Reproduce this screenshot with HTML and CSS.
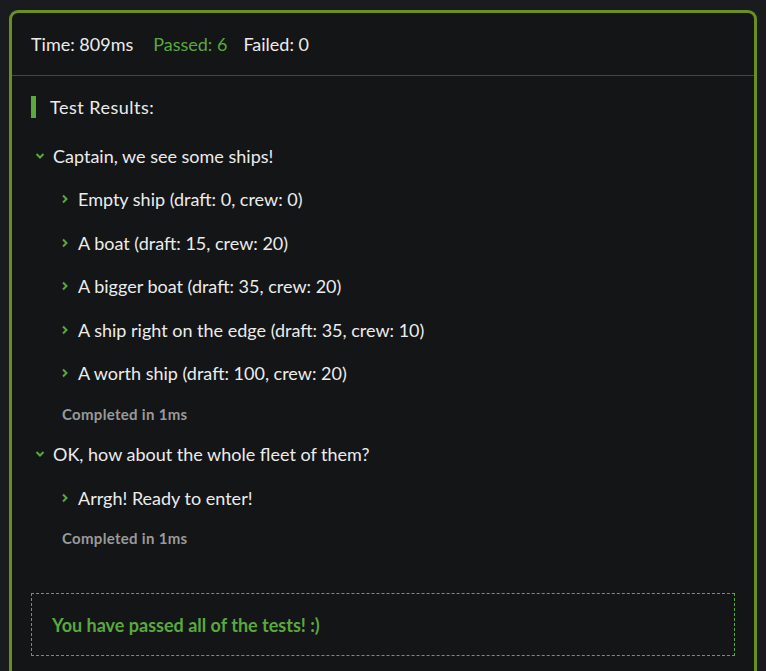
FILE: index.html
```html
<!DOCTYPE html>
<html>
<head>
<meta charset="utf-8">
<link rel="stylesheet" href="styles.css">
</head>
<body>
<div class="card">
  <div class="header">
    <span class="time">Time: 809ms</span>
    <span class="passed">Passed: 6</span>
    <span class="failed">Failed: 0</span>
  </div>
  <div class="content">
    <div class="title"><span class="bar"></span><span>Test Results:</span></div>
    <div class="suite">
      <div class="row suite-row"><svg class="chev-down" width="10" height="8" viewBox="0 0 10 8"><polyline points="1.5,2 5,5.5 8.5,2" fill="none" stroke="#5aa83e" stroke-width="2"/></svg><span>Captain, we see some ships!</span></div>
      <div class="row test-row"><svg class="chev-right" width="8" height="10" viewBox="0 0 8 10"><polyline points="2,1.5 5.5,5 2,8.5" fill="none" stroke="#5aa83e" stroke-width="2"/></svg><span>Empty ship (draft: 0, crew: 0)</span></div>
      <div class="row test-row"><svg class="chev-right" width="8" height="10" viewBox="0 0 8 10"><polyline points="2,1.5 5.5,5 2,8.5" fill="none" stroke="#5aa83e" stroke-width="2"/></svg><span>A boat (draft: 15, crew: 20)</span></div>
      <div class="row test-row"><svg class="chev-right" width="8" height="10" viewBox="0 0 8 10"><polyline points="2,1.5 5.5,5 2,8.5" fill="none" stroke="#5aa83e" stroke-width="2"/></svg><span>A bigger boat (draft: 35, crew: 20)</span></div>
      <div class="row test-row"><svg class="chev-right" width="8" height="10" viewBox="0 0 8 10"><polyline points="2,1.5 5.5,5 2,8.5" fill="none" stroke="#5aa83e" stroke-width="2"/></svg><span>A ship right on the edge (draft: 35, crew: 10)</span></div>
      <div class="row test-row"><svg class="chev-right" width="8" height="10" viewBox="0 0 8 10"><polyline points="2,1.5 5.5,5 2,8.5" fill="none" stroke="#5aa83e" stroke-width="2"/></svg><span>A worth ship (draft: 100, crew: 20)</span></div>
      <div class="completed">Completed in 1ms</div>
    </div>
    <div class="suite">
      <div class="row suite-row"><svg class="chev-down" width="10" height="8" viewBox="0 0 10 8"><polyline points="1.5,2 5,5.5 8.5,2" fill="none" stroke="#5aa83e" stroke-width="2"/></svg><span>OK, how about the whole fleet of them?</span></div>
      <div class="row test-row"><svg class="chev-right" width="8" height="10" viewBox="0 0 8 10"><polyline points="2,1.5 5.5,5 2,8.5" fill="none" stroke="#5aa83e" stroke-width="2"/></svg><span>Arrgh! Ready to enter!</span></div>
      <div class="completed">Completed in 1ms</div>
    </div>
    <div class="success">You have passed all of the tests! :)</div>
  </div>
</div>
</body>
</html>
```
FILE: styles.css
```css
html, body {
  margin: 0;
  background: #1a1b1f;
}
body {
  padding: 10px 9px 0;
  font-family: Lato, "Liberation Sans", sans-serif;
  color: #ececec;
  font-size: 18px;
}
.card {
  border: 3px solid #6b8e23;
  border-bottom: none;
  border-radius: 9px 9px 0 0;
  background: #141516;
  height: 700px;
}
.header {
  height: 62px;
  border-bottom: 1px solid #454545;
  display: flex;
  align-items: center;
  padding-left: 19px;
}
.time { margin-right: 20px; }
.passed { color: #5aa83e; margin-right: 16px; }
.content {
  padding: 20px 19px 0;
}
.title {
  display: flex;
  align-items: center;
  height: 22px;
  margin-bottom: 16px;
  letter-spacing: 0.5px;
}
.bar {
  width: 5px;
  height: 22px;
  background: #5aa83e;
  margin-right: 14px;
}
.row {
  display: flex;
  align-items: center;
  height: 43.5px;
}
.suite-row .chev-down { margin: 0 8px 0 4px; }
.test-row { padding-left: 30px; }
.test-row .chev-right { margin-right: 9px; }
.completed {
  height: 37.5px;
  display: flex;
  align-items: center;
  padding-left: 31px;
  font-size: 15px;
  font-weight: bold;
  color: #9a9a9a;
  letter-spacing: 0.3px;
}
.success {
  margin-top: 36px;
  height: 61px;
  border: 1px dashed #5aa83e;
  display: flex;
  align-items: center;
  padding-left: 20px;
  color: #5aa83e;
  font-weight: bold;
}
```
